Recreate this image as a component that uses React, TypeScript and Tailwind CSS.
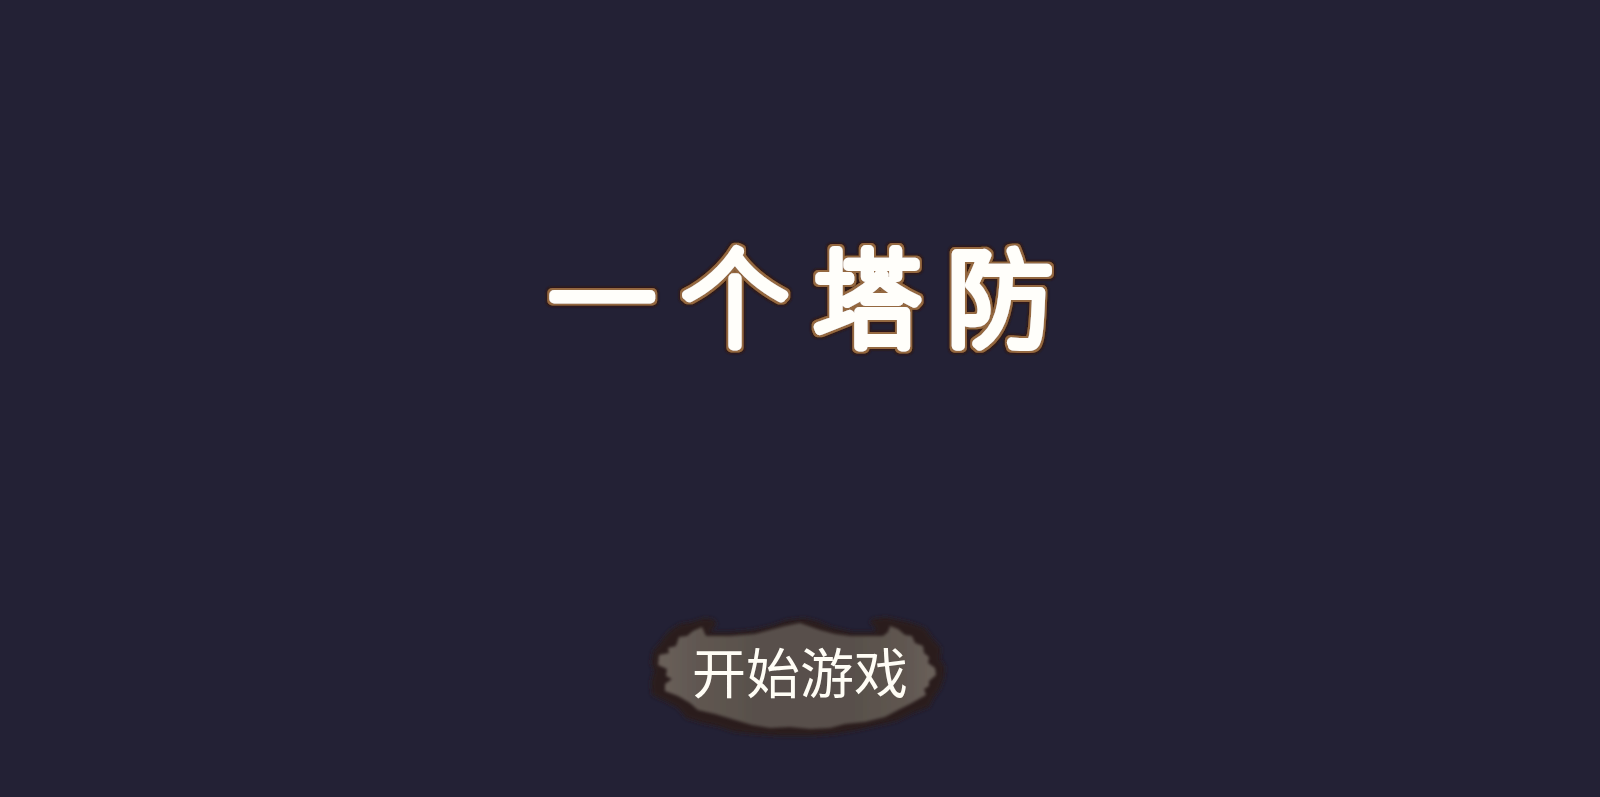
const TITLE_X = "17 150 282 415";

function Title() {
  return (
    <h1 className="w-[536px] max-w-full">
      <svg
        viewBox="0 0 536 190"
        className="block h-auto w-full overflow-visible font-['Noto_Sans_CJK_SC',sans-serif] text-[106px] font-thin"
        strokeLinejoin="round"
        strokeLinecap="round"
      >
        <defs>
          <filter id="title-glow" x="-5%" y="-10%" width="110%" height="120%">
            <feMorphology in="SourceAlpha" operator="dilate" radius="3" result="wide" />
            <feGaussianBlur in="wide" stdDeviation="0.9" result="soft" />
            <feFlood floodColor="#33170f" result="dark" />
            <feComposite in="dark" in2="soft" operator="in" result="halo" />
            <feMorphology in="SourceAlpha" operator="dilate" radius="2" result="near" />
            <feGaussianBlur in="near" stdDeviation="0.6" result="nearSoft" />
            <feFlood floodColor="#94673f" result="brown" />
            <feComposite in="brown" in2="nearSoft" operator="in" result="rim" />
            <feGaussianBlur in="SourceGraphic" stdDeviation="0.6" result="face" />
            <feMerge>
              <feMergeNode in="halo" />
              <feMergeNode in="rim" />
              <feMergeNode in="face" />
            </feMerge>
          </filter>
        </defs>
        <text
          x={TITLE_X}
          y="138"
          fill="#fffefa"
          stroke="#fffefa"
          strokeWidth="10"
          filter="url(#title-glow)"
        >
          一个塔防
        </text>
      </svg>
    </h1>
  );
}

const STONE =
  "M66 31 L90 31 L115 29 L130 25 L145 21 L160 18 L180 25 L195 29 L210 31 L243 31 L248 27 L250 21 L258 24 L265 30 L272 31 L275 38 L283 41 L284 48 L289 52 L288 58 L295 63 L296 70 L289 76 L289 81 L284 84 L286 90 L277 95 L270 99 L258 105 L245 112 L225 117 L205 119 L190 123 L170 124 L150 122 L130 123 L112 120 L95 115 L75 109 L58 105 L50 98 L38 91 L25 86 L25 79 L32 74 L26 71 L27 64 L18 60 L19 50 L29 48 L28 43 L36 41 L39 32 L47 31 L53 26 L62 22 Z";

const RIM =
  "M70 27 L77 19 L73 14 L64 13 L52 17 L40 19 L32 24 L25 31 L20 38 L13 46 L11 58 L14 66 L11 77 L12 90 L25 96 L38 103 L46 113 L62 118 L80 122 L95 127 L115 129 L140 131 L170 131 L195 129 L218 125 L240 120 L257 116 L273 108 L289 102 L294 92 L300 84 L304 73 L305 62 L300 54 L301 43 L293 34 L285 23 L272 18 L259 15 L246 12 L232 14 L230 18 L236 23 L234 27 L212 27 L191 22 L177 16 L164 13 L147 15 L130 21 L112 25 L90 27 Z";

function StartButton() {
  return (
    <button
      type="button"
      className="grid w-[320px] cursor-pointer place-items-center text-[#fffdf5]"
    >
      <svg viewBox="0 0 320 140" className="col-start-1 row-start-1 w-full" aria-hidden="true">
        <defs>
          <linearGradient id="stone-fill" x1="0" y1="0" x2="1" y2="0">
            <stop offset="0%" stopColor="#6a605a" />
            <stop offset="16%" stopColor="#5f5650" />
            <stop offset="35%" stopColor="#58504b" />
            <stop offset="70%" stopColor="#58504b" />
            <stop offset="88%" stopColor="#5f5650" />
            <stop offset="100%" stopColor="#6a605a" />
          </linearGradient>
          <filter id="stone-soft" x="-5%" y="-10%" width="110%" height="120%">
            <feGaussianBlur stdDeviation="2.2" />
          </filter>
          <filter id="stone-edge" x="-5%" y="-10%" width="110%" height="120%">
            <feGaussianBlur stdDeviation="1.8" />
          </filter>
        </defs>
        <path d={RIM} fill="#2c1f1b" filter="url(#stone-soft)" />
        <path d={STONE} fill="url(#stone-fill)" filter="url(#stone-edge)" />
      </svg>
      <span className="col-start-1 row-start-1 pb-2 font-['Noto_Sans_CJK_SC',sans-serif] text-[54px] leading-none font-normal">
        开始游戏
      </span>
    </button>
  );
}

export default function App() {
  return (
    <main className="flex min-h-screen flex-col items-center gap-[215px] bg-[#232135] pt-[200px]">
      <Title />
      <StartButton />
    </main>
  );
}
